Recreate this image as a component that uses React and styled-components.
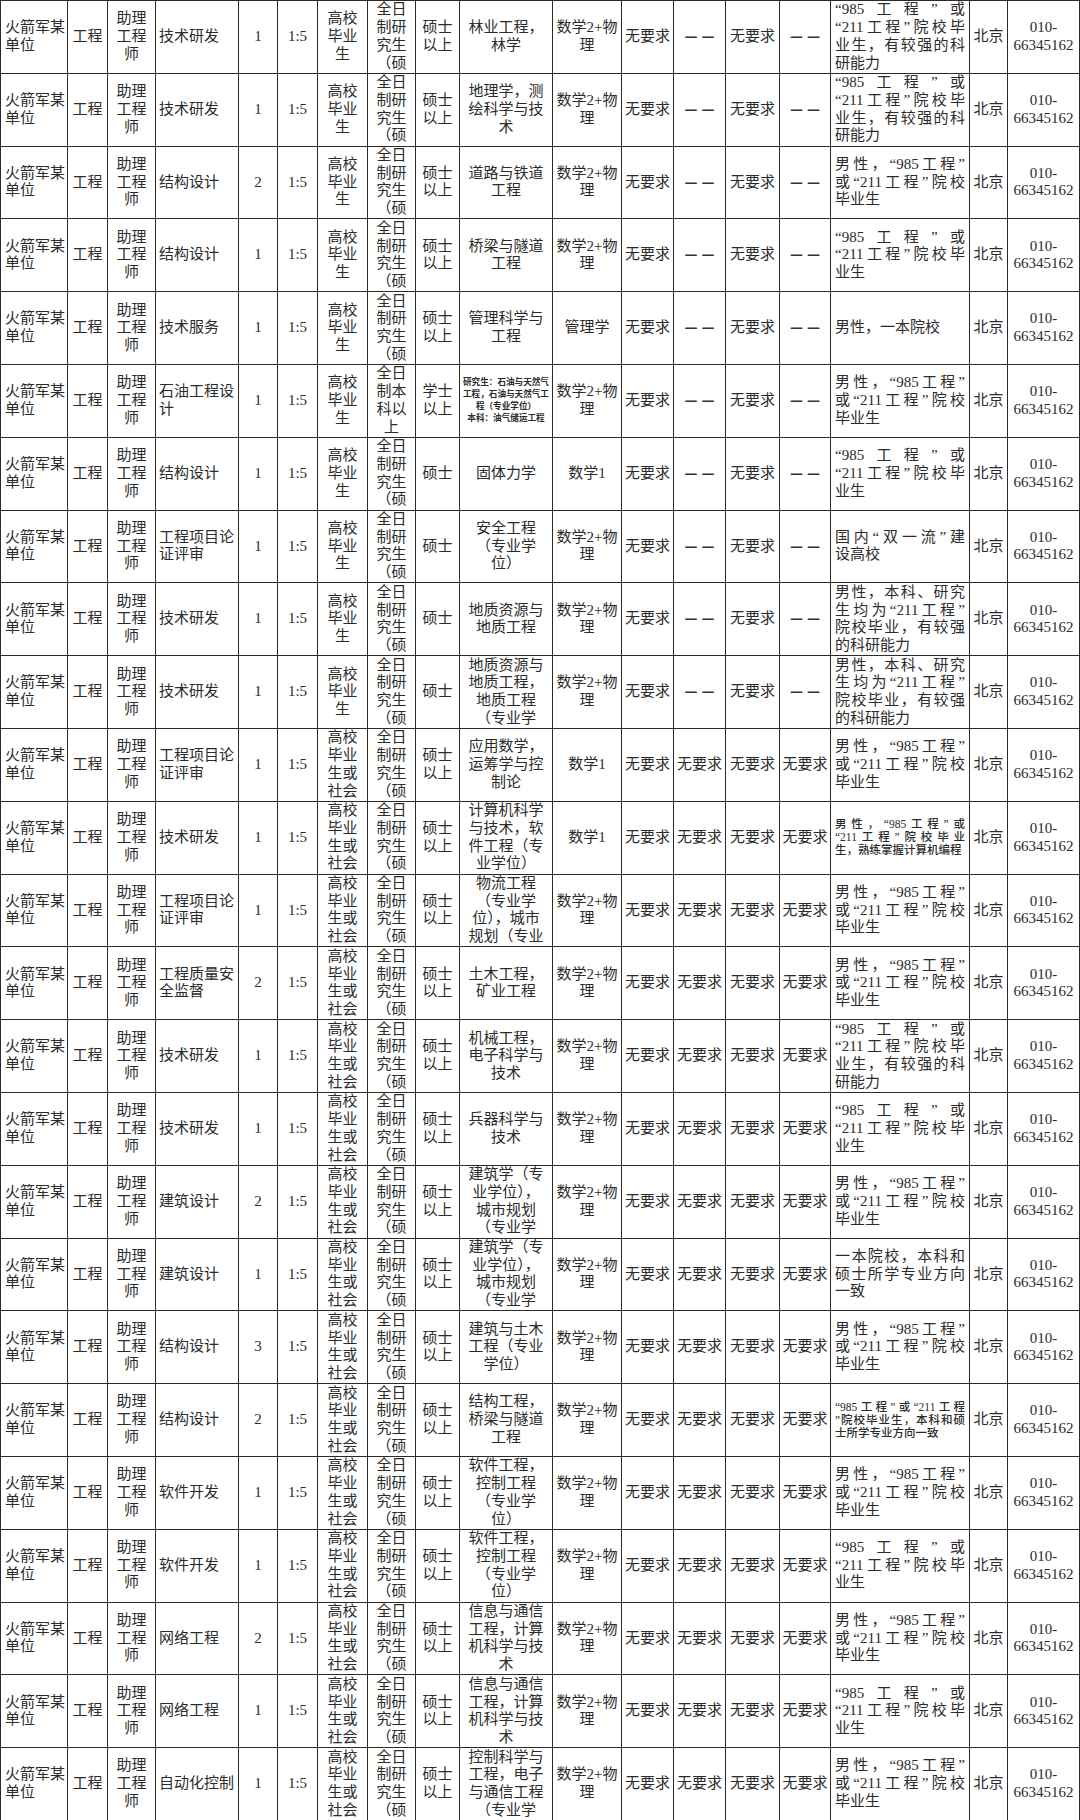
import React from 'react';
import styled, { createGlobalStyle } from 'styled-components';

const LINE = '#2a2a2a';

const GlobalStyle = createGlobalStyle`
  html, body {
    margin: 0;
    padding: 0;
    background: #fff;
  }
  body {
    font-family: "Liberation Serif", "Noto Sans CJK SC", serif;
    color: #2b2b2b;
  }
`;

// one entry per column of the sheet, widths in px
const COLUMNS = [
  { key: 'unit', width: 67, align: 'left', pad: 4 },
  { key: 'type', width: 40 },
  { key: 'post', width: 48 },
  { key: 'job', width: 83, align: 'left' },
  { key: 'num', width: 39 },
  { key: 'ratio', width: 40 },
  { key: 'source', width: 50 },
  { key: 'edu', width: 48 },
  { key: 'degree', width: 44 },
  { key: 'major', width: 93 },
  { key: 'subject', width: 69 },
  { key: 'c12', width: 52 },
  { key: 'c13', width: 52 },
  { key: 'c14', width: 54 },
  { key: 'c15', width: 51 },
  { key: 'other', width: 139, align: 'justify', pad: 4 },
  { key: 'loc', width: 38 },
  { key: 'phone', width: 72 },
];

const S2 = '数学2+物|理';
const OA4 = '“985工程”或|“211工程”院校毕|业生，有较强的科|研能力';
const OA3 = '“985工程”或|“211工程”院校毕|业生';
const OM = '男性，“985工程”|或“211工程”院校|毕业生';
const OB = '男性，本科、研究|生均为“211工程”|院校毕业，有较强|的科研能力';

const common = {
  unit: '火箭军某|单位',
  type: '工程',
  post: '助理|工程|师',
  ratio: '1:5',
  edu: '全日|制研|究生|（硕',
  degree: '硕士|以上',
  c12: '无要求',
  c14: '无要求',
  loc: '北京',
  phone: '010-|66345162',
};
const early = { ...common, source: '高校|毕业|生', c13: '——', c15: '——' };
const later = { ...common, source: '高校|毕业|生或|社会', c13: '无要求', c15: '无要求' };

const mk = (group, job, num, major, subject, other, extra = {}) => ({
  ...group, job, num, major, subject, other, ...extra,
});

const ROWS = [
  mk(early, '技术研发', '1', '林业工程，|林学', S2, OA4),
  mk(early, '技术研发', '1', '地理学，测|绘科学与技|术', S2, OA4),
  mk(early, '结构设计', '2', '道路与铁道|工程', S2, OM),
  mk(early, '结构设计', '1', '桥梁与隧道|工程', S2, OA3),
  mk(early, '技术服务', '1', '管理科学与|工程', '管理学', '男性，一本院校'),
  mk(
    early, '石油工程设|计', '1',
    { text: '研究生：石油与天然气|工程，石油与天然气工|程（专业学位）|本科：油气储运工程', size: 'xs' },
    S2, OM,
    { edu: '全日|制本|科以|上', degree: '学士|以上' },
  ),
  mk(early, '结构设计', '1', '固体力学', '数学1', OA3, { degree: '硕士' }),
  mk(early, '工程项目论|证评审', '1', '安全工程|（专业学|位）', S2, '国内“双一流”建|设高校', { degree: '硕士' }),
  mk(early, '技术研发', '1', '地质资源与|地质工程', S2, OB, { degree: '硕士' }),
  mk(early, '技术研发', '1', '地质资源与|地质工程，|地质工程|（专业学', S2, OB, { degree: '硕士' }),
  mk(later, '工程项目论|证评审', '1', '应用数学，|运筹学与控|制论', '数学1', OM),
  mk(
    later, '技术研发', '1', '计算机科学|与技术，软|件工程（专|业学位）', '数学1',
    { text: '男性，“985工程”或|“211工程”院校毕业|生，熟练掌握计算机编程', size: 'sm' },
  ),
  mk(later, '工程项目论|证评审', '1', '物流工程|（专业学|位），城市|规划（专业', S2, OM),
  mk(later, '工程质量安|全监督', '2', '土木工程，|矿业工程', S2, OM),
  mk(later, '技术研发', '1', '机械工程，|电子科学与|技术', S2, OA4),
  mk(later, '技术研发', '1', '兵器科学与|技术', S2, OA3),
  mk(later, '建筑设计', '2', '建筑学（专|业学位），|城市规划|（专业学', S2, OM),
  mk(later, '建筑设计', '1', '建筑学（专|业学位），|城市规划|（专业学', S2, '一本院校，本科和|硕士所学专业方向|一致'),
  mk(later, '结构设计', '3', '建筑与土木|工程（专业|学位）', S2, OM),
  mk(
    later, '结构设计', '2', '结构工程，|桥梁与隧道|工程', S2,
    { text: '“985工程”或“211工程|”院校毕业生，本科和硕|士所学专业方向一致', size: 'sm' },
  ),
  mk(later, '软件开发', '1', '软件工程，|控制工程|（专业学|位）', S2, OM),
  mk(later, '软件开发', '1', '软件工程，|控制工程|（专业学|位）', S2, OA3),
  mk(later, '网络工程', '2', '信息与通信|工程，计算|机科学与技|术', S2, OM),
  mk(later, '网络工程', '1', '信息与通信|工程，计算|机科学与技|术', S2, OA3),
  mk(later, '自动化控制', '1', '控制科学与|工程，电子|与通信工程|（专业学', S2, OM),
];

const SIZES = {
  md: { font: 15, lh: 17.7, weight: 400 },
  sm: { font: 11.5, lh: 13, weight: 500 },
  xs: { font: 8.6, lh: 11.7, weight: 700 },
};

const ALIGN = { left: 'flex-start', justify: 'stretch', center: 'center' };

const Sheet = styled.div`
  display: grid;
  grid-template-columns: ${COLUMNS.map((c) => `${c.width}px`).join(' ')};
  grid-auto-rows: 72.8px;
  width: 1080px;
  box-sizing: border-box;
  border-top: 1px solid ${LINE};
  border-left: 1px solid ${LINE};
`;

const Cell = styled.div`
  box-sizing: border-box;
  min-width: 0;
  border-right: 1px solid ${LINE};
  border-bottom: 1px solid ${LINE};
  padding: 0 ${(p) => p.$pad}px;
  display: flex;
  flex-direction: column;
  justify-content: center;
  justify-content: safe center;
  align-items: ${(p) => ALIGN[p.$align]};
  overflow: hidden;
  font-size: ${(p) => SIZES[p.$size].font}px;
  line-height: ${(p) => SIZES[p.$size].lh}px;
  font-weight: ${(p) => SIZES[p.$size].weight};
`;

const Line = styled.span`
  display: block;
  white-space: nowrap;
  text-align: ${(p) => (p.$justify ? 'justify' : 'left')};
  text-align-last: ${(p) => (p.$justify ? 'justify' : 'auto')};
`;

const Dash = styled.span`
  font-family: "DejaVu Sans", sans-serif;
  font-size: 13px;
  font-weight: 700;
  letter-spacing: 4px;
  margin-right: -4px;
  color: #333;
`;

const SheetCell = ({ column, value }) => {
  const { text, size = 'md' } = typeof value === 'object' ? value : { text: value };
  const align = column.align || 'center';
  const lines = text.split('|');

  return (
    <Cell $align={align} $pad={column.pad ?? 3} $size={size}>
      {text === '——' ? (
        <Dash>——</Dash>
      ) : (
        lines.map((line, i) => (
          <Line key={i} $justify={align === 'justify' && i < lines.length - 1}>
            {line}
          </Line>
        ))
      )}
    </Cell>
  );
};

const App = () => (
  <>
    <GlobalStyle />
    <Sheet lang="zh-CN">
      {ROWS.map((row, r) =>
        COLUMNS.map((column) => (
          <SheetCell key={`${r}-${column.key}`} column={column} value={row[column.key]} />
        )),
      )}
    </Sheet>
  </>
);

export default App;
